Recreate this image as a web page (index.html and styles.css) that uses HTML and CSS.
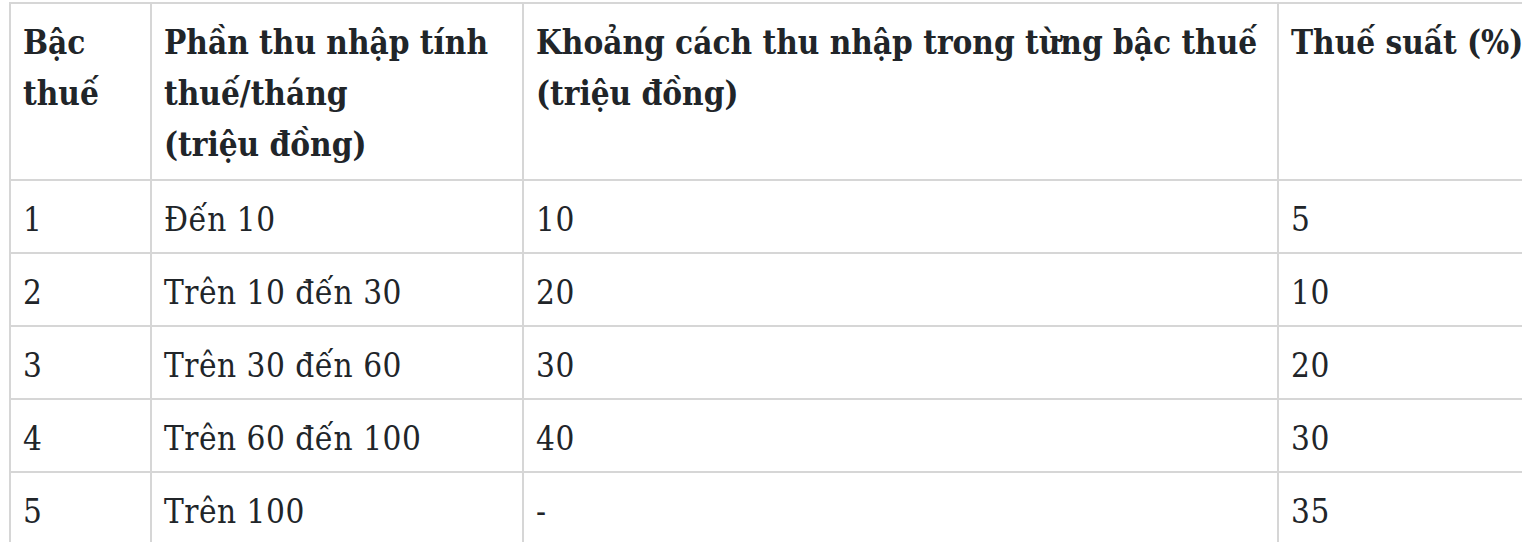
FILE: index.html
```html
<!DOCTYPE html>
<html lang="vi">
<head>
<meta charset="utf-8">
<title>Biểu thuế lũy tiến</title>
<link rel="stylesheet" href="styles.css">
</head>
<body>
<div class="wrap">
<table class="tax">
<colgroup>
<col class="c1"><col class="c2"><col class="c3"><col class="c4">
</colgroup>
<thead>
<tr>
<th>Bậc thuế</th>
<th>Phần thu nhập tính thuế/tháng<br>(triệu đồng)</th>
<th>Khoảng cách thu nhập trong từng bậc thuế (triệu đồng)</th>
<th>Thuế suất (%)</th>
</tr>
</thead>
<tbody>
<tr><td>1</td><td>Đến 10</td><td>10</td><td>5</td></tr>
<tr><td>2</td><td>Trên 10 đến 30</td><td>20</td><td>10</td></tr>
<tr><td>3</td><td>Trên 30 đến 60</td><td>30</td><td>20</td></tr>
<tr><td>4</td><td>Trên 60 đến 100</td><td>40</td><td>30</td></tr>
<tr><td>5</td><td>Trên 100</td><td>-</td><td>35</td></tr>
</tbody>
</table>
</div>
</body>
</html>
```
FILE: styles.css
```css
html, body {
  margin: 0;
  padding: 0;
  background: #fff;
  overflow: hidden;
}
.wrap {
  padding: 2px 0 0 9px;
  width: 1560px;
}
.tax {
  border-collapse: collapse;
  table-layout: fixed;
  width: 1540px;
  font-family: "DejaVu Serif Condensed", "DejaVu Serif", "Liberation Serif", serif;
  font-stretch: semi-condensed;
  font-size: 33px;
  line-height: 51px;
  color: #212529;
}
.c1 { width: 141px; }
.c2 { width: 372px; }
.c3 { width: 755px; }
.c4 { width: 272px; }
.tax th, .tax td {
  border: 2px solid #d6d6d6;
  text-align: left;
  vertical-align: top;
}
.tax th {
  font-weight: bold;
  padding: 13px 12px 9px;
}
.tax td {
  padding: 13px 12px 7px;
  letter-spacing: 0.5px;
}
```
